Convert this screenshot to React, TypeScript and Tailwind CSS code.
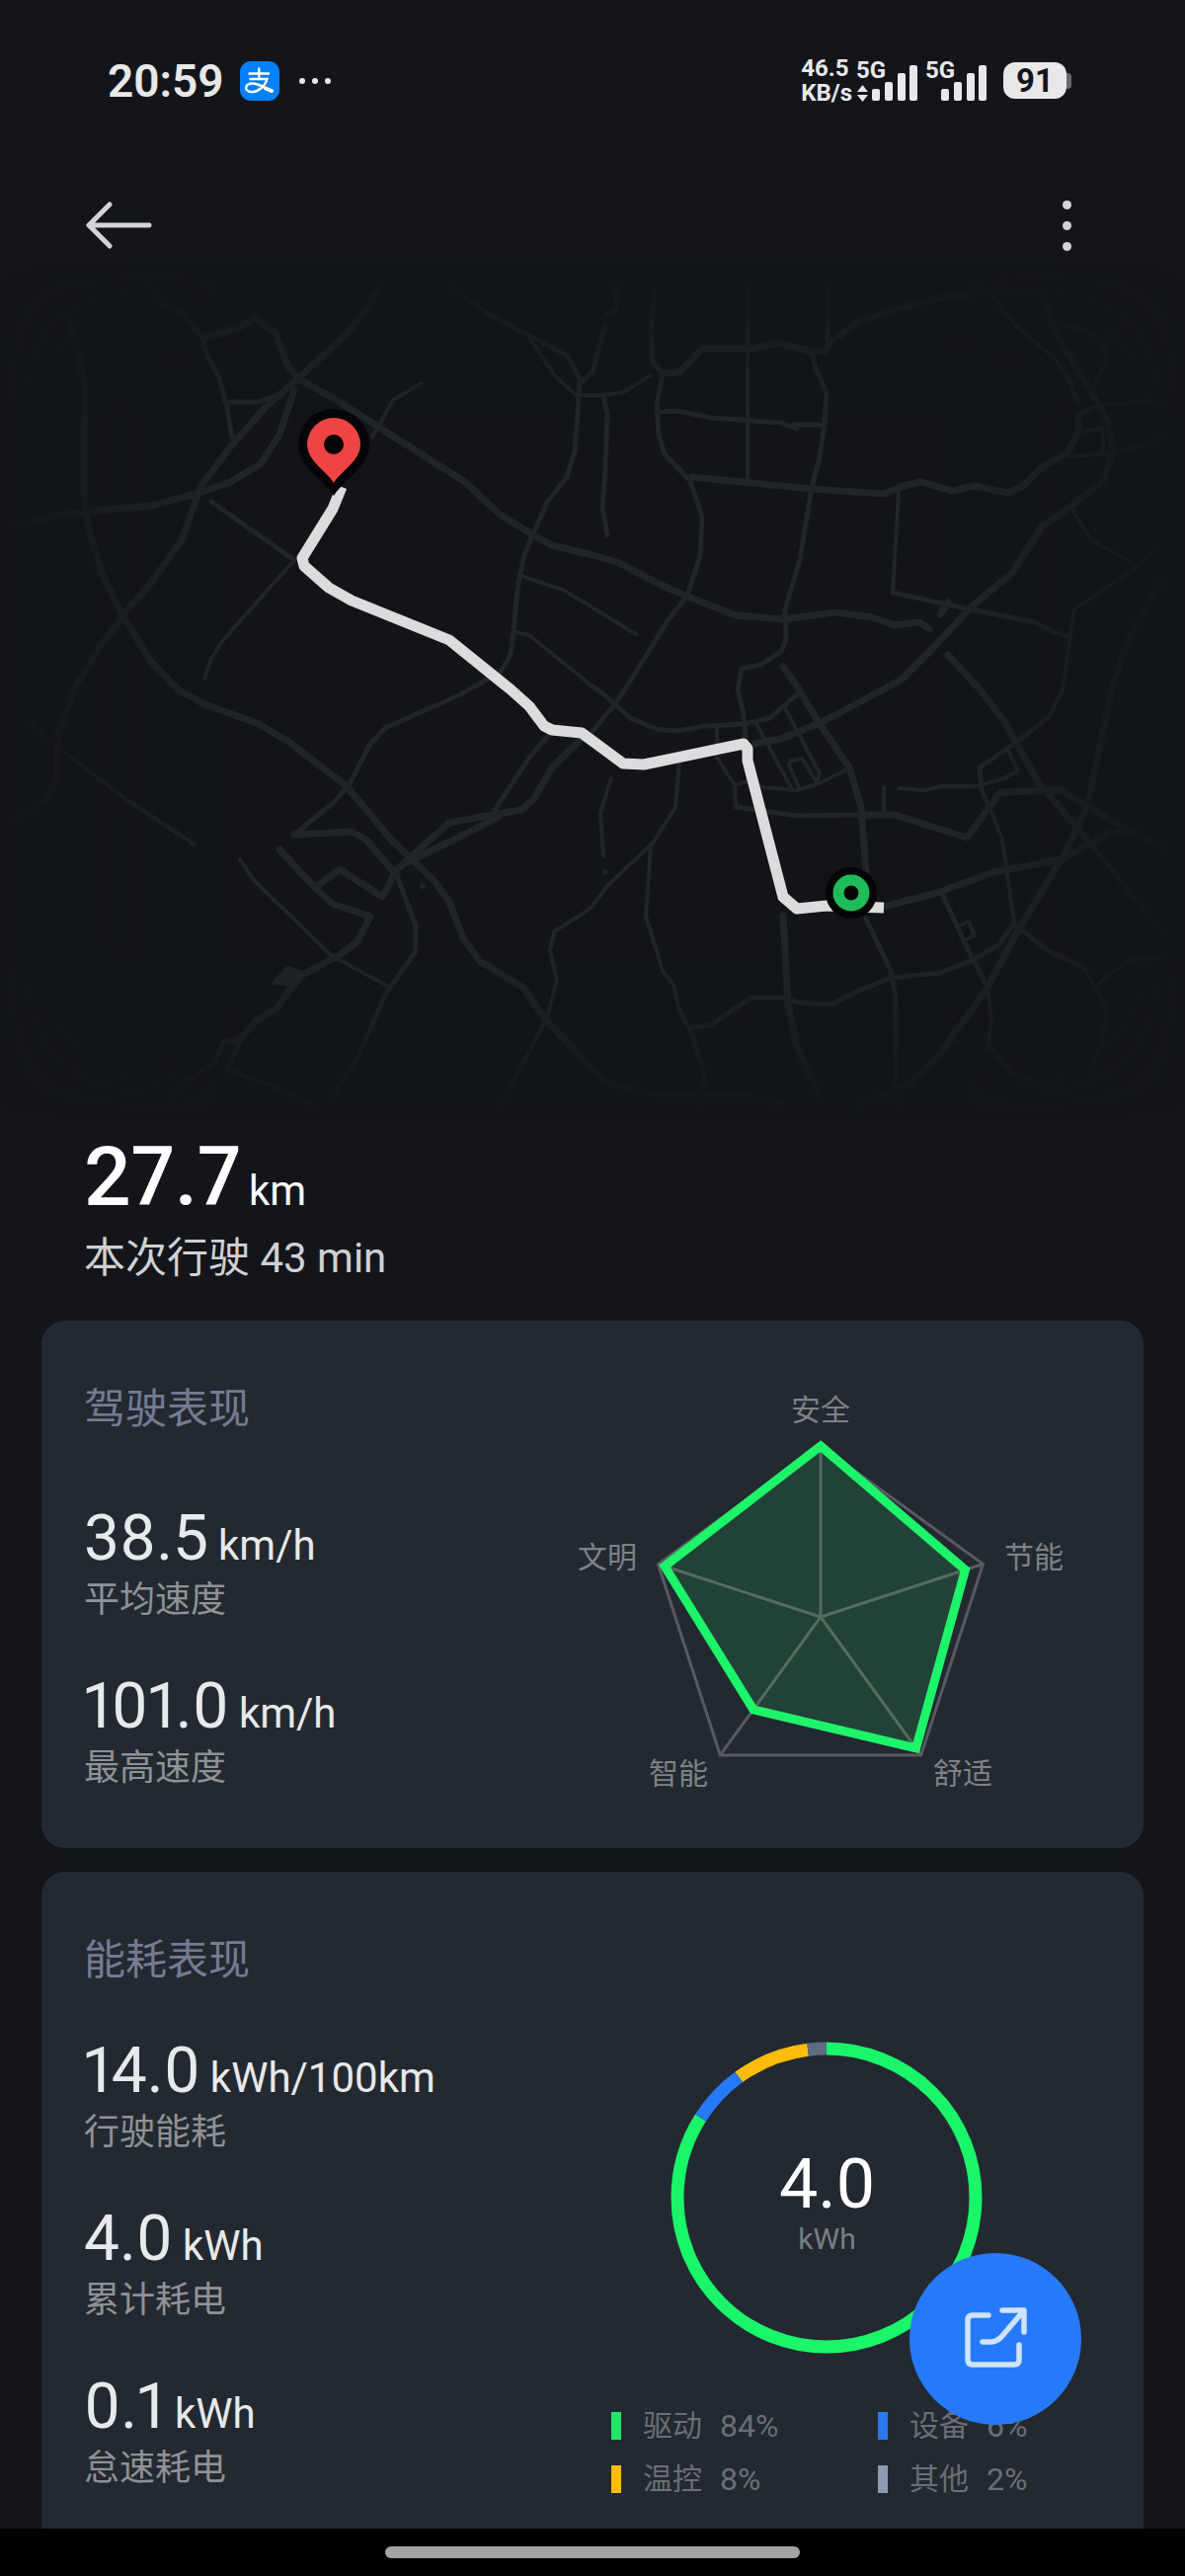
import React from "react";

type Stat = { value: string; unit: string; label: string };

const driveStats: Stat[] = [
  { value: "38.5", unit: "km/h", label: "平均速度" },
  { value: "101.0", unit: "km/h", label: "最高速度" },
];

const energyStats: Stat[] = [
  { value: "14.0", unit: "kWh/100km", label: "行驶能耗" },
  { value: "4.0", unit: "kWh", label: "累计耗电" },
  { value: "0.1", unit: "kWh", label: "怠速耗电" },
];

const usage = [
  { name: "驱动", percent: 84, stroke: "#1af56a", mark: "bg-[#22e767]" },
  { name: "设备", percent: 6, stroke: "#267afa", mark: "bg-[#2878f0]" },
  { name: "温控", percent: 8, stroke: "#ffbc0a", mark: "bg-[#ffbc0f]" },
  { name: "其他", percent: 2, stroke: "#5f6b80", mark: "bg-[#8d9ab5]" },
];

const scores = [
  { name: "安全", value: 1, x: 251, y: 51 },
  { name: "节能", value: 0.89, x: 467, y: 200 },
  { name: "舒适", value: 0.95, x: 395, y: 419 },
  { name: "智能", value: 0.67, x: 107, y: 419 },
  { name: "文明", value: 0.96, x: 35, y: 200 },
];

// Wide roads first, then medium and narrow ones
const roads = [
  {
    width: 7,
    lines: [
      "69,320 78,353 86,393 85,443 85,500 90,537 103,580 124,623 153,670 180,698 207,713 260,732 291,750 350,795 377,827 396,850 415,868 440,892 455,913 469,950 486,973 530,1000 553,1033 600,1083 619,1098 657,1107 707,1108 753,1110 791,1118",
      "15,532 57,522 88,518 153,512 199,500 233,488 264,470 283,440 298,395",
      "385,293 352,337 302,383 268,413 233,453 203,493 184,547 153,590 124,623 96,663 75,698 59,743 57,790 46,810 13,830",
      "205,342 239,333 258,322 279,337 291,370 302,383 344,407 383,432 471,488 505,520 540,542 559,552 600,562 627,570 669,592 694,603 745,623 795,627 845,620 883,625 906,633 931,630 941,637",
      "671,378 688,377 711,353 761,353 788,347 822,356 835,355 843,345",
      "849,340 868,327 910,312 952,302 1000,295 1040,293",
      "701,483 822,495 895,500 914,492 933,488 964,497 987,492 1021,499 1036,492 1055,473 1082,458 1092,437 1092,420",
      "1053,293 1071,340 1105,397 1122,427 1127,457 1117,487 1084,513 1055,533 1025,580 983,615 944,657 914,687 895,698 830,732 791,748 765,753",
      "1174,590 1140,653 1126,698 1101,817 1075,870 1032,940 998,1003 952,1067 921,1097 868,1120",
      "960,663 992,698 1017,730 1052,793 1101,850",
      "872,825 906,825 979,848 1002,817 1013,802 1075,800 1136,837 1182,858",
      "895,918 952,903 1006,883 1075,870 1124,843 1142,843",
      "283,860 320,900 337,915 375,928 362,953 344,967 306,987 293,1003 279,1022 260,1033 243,1052",
      "321,897 344,880 387,908 402,880 455,833 498,825 528,820 540,810 559,777 589,748",
      "413,873 460,850 505,827",
      "298,845 356,842 371,850 402,887",
      "793,675 809,698 830,733 860,777 872,817 877,883 877,920",
      "793,927 798,1017 807,1060 830,1110",
      "960,610 952,622",
    ],
  },
  {
    width: 5,
    lines: [
      "153,287 165,310 186,317 205,342 209,358 222,383 230,413 235,443",
      "459,292 494,317 536,340 574,360 587,383 586,403 582,457 574,483 555,507 540,540 530,565 524,597 520,640 517,663 507,680 475,698 467,703 390,737 375,753 352,797 337,813 298,845",
      "613,328 600,377 587,388",
      "625,290 623,317 615,318",
      "611,400 615,420 613,477 610,513 615,542",
      "232,407 260,407 283,400",
      "214,508 298,567",
      "600,695 608,700 638,727 665,738 684,740 715,735 753,733 780,727 807,703",
      "663,293 659,337 661,367 671,378 665,410 667,440 673,460 699,487 711,523 709,563 696,603 677,627 661,653 633,698 621,715 600,740",
      "822,357 826,373 837,397 835,430 830,463 822,493 810,567 795,617 796,647 791,660 770,673 751,677 747,698 753,723 755,750",
      "669,417 684,416 722,423 791,428 807,434 803,430 832,430",
      "745,817 807,826 872,825",
      "904,600 983,617 1048,630 1067,640 1084,645",
      "1101,850 1180,947",
      "1063,725 1029,752 992,777 994,800 1002,817",
      "1027,935 1011,957 983,973 952,985 902,990 872,1002 841,1017 810,1015 791,1010 761,1010 719,1038 701,1040",
      "877,930 902,983 907,1010 907,1127",
      "243,1052 226,1055 216,1077 184,1097 168,1123",
      "243,1053 230,1083 268,1097 318,1120",
      "402,887 421,937 421,963 390,1007 364,1067 333,1117",
      "501,820 536,767 555,745",
      "688,1023 701,1047 713,1087 711,1123",
      "954,905 983,967 1000,1000",
      "1092,420 1113,410",
      "1029,937 1061,962 1098,980",
    ],
  },
  {
    width: 4,
    lines: [
      "427,388 398,405 383,432 377,442",
      "298,567 226,648 214,667 207,687",
      "536,342 563,382 584,400 611,400 631,397 659,380",
      "528,583 570,597 600,615 644,642",
      "522,640 536,643 600,695",
      "838,290 838,347",
      "757,290 757,488",
      "910,498 904,600",
      "1092,410 1082,383 1067,362 1029,330 1002,297",
      "1075,330 1095,332 1117,345 1120,367 1105,397",
      "1117,345 1147,327",
      "1113,410 1182,405",
      "1092,437 1117,434 1117,458",
      "1086,462 1127,459 1185,442",
      "1084,513 1105,547 1153,573 1113,600 1088,617 1084,643 1076,698 1063,725",
      "1153,573 1174,553",
      "726,738 726,767 744,795 745,817",
      "744,795 757,791 772,797 807,800 830,793 860,778",
      "766,733 801,797",
      "795,717 830,783 828,790",
      "809,797 799,775 801,770 812,768 826,790",
      "895,797 895,823",
      "910,798 937,800 953,796 990,796 1017,788 1031,780 1021,760",
      "1002,817 1015,850 1027,933",
      "1000,1000 1004,1033 1001,1058 1029,1090 1098,1107",
      "969,938 981,933 987,947 977,952",
      "1098,980 1120,1020 1117,1053 1098,1100",
      "1113,995 1143,972 1182,970",
      "688,773 684,817 659,857 654,927 671,983 682,997 688,1023",
      "659,855 615,897 600,917 593,923 561,943 557,963 564,993 553,1033 524,1087 505,1123",
      "619,788 608,823 611,867",
      "25,728 57,755 126,808 197,855",
      "243,870 256,890 335,967 392,998",
    ],
  },
];

const route =
  "346,493 337,515 306,565 308,573 333,595 356,608 455,648 517,698 536,715 551,735 559,739 589,742 631,773 652,774 753,753 757,758 757,770 793,908 807,920 837,917 895,919";

function StatusBar() {
  return (
    <div className="flex h-[163px] items-center justify-between pl-[109px] pr-[115px] text-[#e8e8e8]">
      <div className="flex items-center">
        <span className="text-[46px] font-semibold leading-none">20:59</span>
        <svg className="ml-4 size-10" viewBox="0 0 40 40" aria-label="支付宝">
          <rect width="40" height="40" rx="11" fill="#0480fb" />
          <g fill="none" stroke="#fff" strokeWidth="2.4" strokeLinecap="round">
            <path d="M9.5 12.5H29M19.3 7.5V18M10.5 18H27.5C25.5 25 18 32 10.5 31C4 30 5 23 12 22.5C19 22 26 28 33 30" />
            <path d="M26 27.5L32 30" strokeWidth="4" />
          </g>
        </svg>
        <div className="ml-5 flex gap-[7px]">
          <i className="size-[6px] rounded-full bg-current" />
          <i className="size-[6px] rounded-full bg-current" />
          <i className="size-[6px] rounded-full bg-current" />
        </div>
      </div>
      <div className="flex items-center">
        <div className="mr-1 flex flex-col text-[24px] font-bold leading-[25px]">
          <span>46.5</span>
          <span>KB/s</span>
        </div>
        <Signal arrows />
        <div className="w-[7px]" />
        <Signal />
        <div className="ml-4 flex items-center">
          <span className="flex h-[37px] w-16 items-center justify-center rounded-xl bg-[#e8e8e8] text-[33px] font-bold leading-none text-[#13151a]">
            91
          </span>
          <i className="h-4 w-[5px] rounded-r bg-[#68696d]" />
        </div>
      </div>
    </div>
  );
}

function Signal({ arrows = false }: { arrows?: boolean }) {
  return (
    <svg className="h-12 w-[63px]" viewBox="0 0 63 48" fill="currentColor">
      <text x="0" y="21" fontSize="24" fontWeight="700">
        5G
      </text>
      {arrows && <path d="M6.500 28L12 35H1ZM6.500 45L1 38H12Z" />}
      <rect x="16" y="32" width="8" height="12" rx="2" />
      <rect x="29" y="25" width="8" height="19" rx="2" />
      <rect x="42" y="16" width="8" height="28" rx="2" />
      <rect x="54" y="8" width="8" height="36" rx="2" />
    </svg>
  );
}

function TopBar() {
  return (
    <header className="flex h-[130px] items-center justify-between px-[86px] text-[#d3d4d6]">
      <button type="button" aria-label="返回">
        <svg className="h-12 w-[70px]" viewBox="0 0 70 48" fill="none" stroke="currentColor" strokeWidth="5" strokeLinecap="round" strokeLinejoin="round">
          <path d="M65 24H4M25 3L4 24L25 45" />
        </svg>
      </button>
      <button type="button" aria-label="更多" className="flex w-[68px] flex-col items-center gap-3">
        <i className="size-[9px] rounded-full bg-current" />
        <i className="size-[9px] rounded-full bg-current" />
        <i className="size-[9px] rounded-full bg-current" />
      </button>
    </header>
  );
}

function RouteMap() {
  return (
    <svg className="-mt-[23px] block h-auto w-full" viewBox="0 270 1200 860" fill="none" role="img" aria-label="行驶路线">
      <defs>
        <linearGradient id="fadeX">
          <stop offset="0" stopColor="#fff" stopOpacity="0" />
          <stop offset="0.2" stopColor="#fff" />
          <stop offset="0.8" stopColor="#fff" />
          <stop offset="1" stopColor="#fff" stopOpacity="0" />
        </linearGradient>
        <linearGradient id="fadeY" x2="0" y2="1">
          <stop offset="0" stopColor="#fff" stopOpacity="0" />
          <stop offset="0.18" stopColor="#fff" />
          <stop offset="0.8" stopColor="#fff" />
          <stop offset="1" stopColor="#fff" stopOpacity="0" />
        </linearGradient>
        <mask id="maskX" maskUnits="userSpaceOnUse" x="0" y="270" width="1200" height="860">
          <rect y="270" width="1200" height="860" fill="url(#fadeX)" />
        </mask>
        <mask id="maskY" maskUnits="userSpaceOnUse" x="0" y="270" width="1200" height="860">
          <rect y="270" width="1200" height="860" fill="url(#fadeY)" />
        </mask>
      </defs>
      <g mask="url(#maskX)">
        <g mask="url(#maskY)" stroke="#212429" strokeLinecap="round" strokeLinejoin="round">
          <rect y="270" width="1200" height="860" fill="#121418" stroke="none" />
          {roads.map((group) =>
            group.lines.map((points) => <polyline key={points} points={points} strokeWidth={group.width} />)
          )}
          <path d="M291 980L277 995L300 997L306 985Z" fill="#212429" strokeWidth="4" />
          <circle cx="428" cy="897" r="3" fill="#212429" stroke="none" />
          <circle cx="613" cy="883" r="3" fill="#212429" stroke="none" />
        </g>
      </g>
      <polyline points={route} stroke="#dcdcdc" strokeWidth="11" strokeLinejoin="round" />
      <path d="M338 502C327 485 302 472 302 450A36 36 0 0 1 374 450C374 472 349 485 338 502Z" fill="#040506" />
      <path d="M338 489C332 478 311 467 311 450A27 27 0 0 1 365 450C365 467 344 478 338 489Z" fill="#ef4444" />
      <circle cx="338" cy="450" r="10" fill="#040506" />
      <circle cx="862" cy="904" r="26" fill="#040506" />
      <circle cx="862" cy="904" r="13" stroke="#1fbd59" strokeWidth="11" />
    </svg>
  );
}

function StatItem({ value, unit, label }: Stat) {
  return (
    <div>
      <p className="text-[42px] leading-[76px] text-[#e8e9eb]">
        <span className="mr-[10px] text-[64px] proportional-nums">{value}</span>
        {unit}
      </p>
      <p className="text-[36px] leading-[34px] text-[#8f9296]">{label}</p>
    </div>
  );
}

function RadarChart() {
  const radius = 173;
  const point = (index: number, value: number) => {
    const angle = ((index * 72 - 90) * Math.PI) / 180;
    return `${251 + Math.cos(angle) * radius * value},${250 + Math.sin(angle) * radius * value}`;
  };
  return (
    <svg className="h-auto w-[502px]" viewBox="0 0 502 440" fill="none" role="img" aria-label="驾驶表现评分">
      <g stroke="#5a5a5e" strokeWidth="3">
        <polygon points={scores.map((_, i) => point(i, 1)).join(" ")} />
        {scores.map((s, i) => (
          <polyline key={s.name} points={`251,250 ${point(i, 1)}`} />
        ))}
      </g>
      <polygon
        points={scores.map((s, i) => point(i, s.value)).join(" ")}
        fill="#1ef46a"
        fillOpacity="0.12"
        stroke="#1ef46a"
        strokeWidth="9"
      />
      {scores.map((s) => (
        <text key={s.name} x={s.x} y={s.y} textAnchor="middle" fontSize="30" fill="#7f8286">
          {s.name}
        </text>
      ))}
    </svg>
  );
}

function UsageRing() {
  let start = 0;
  return (
    <div className="relative size-[317px]">
      <svg className="size-full -rotate-90" viewBox="0 0 317 317" fill="none" role="img" aria-label="能耗占比">
        {usage.map((u) => {
          const offset = -start;
          start += u.percent;
          return (
            <circle
              key={u.name}
              cx="158"
              cy="158"
              r="151"
              pathLength="100"
              stroke={u.stroke}
              strokeWidth="13"
              strokeDasharray={`${u.percent} ${100 - u.percent}`}
              strokeDashoffset={offset}
            />
          );
        })}
      </svg>
      <div className="absolute inset-0 flex flex-col items-center justify-center pt-3">
        <span className="text-[70px] leading-[72px] text-white">4.0</span>
        <span className="text-[30px] leading-[40px] text-[#7b7e83]">kWh</span>
      </div>
    </div>
  );
}

export default function App() {
  return (
    <div className="flex min-h-screen flex-col bg-[#13151a] font-[Roboto,'Noto_Sans_CJK_SC',sans-serif]">
      <StatusBar />
      <TopBar />
      <RouteMap />

      <main className="flex flex-1 flex-col px-[42px]">
        <section className="mb-[38px] px-[43px] pt-[19px]">
          <p className="text-[42px] leading-[86px] text-white">
            <span className="mr-2 text-[84px] font-medium proportional-nums">27.7</span>
            km
          </p>
          <p className="text-[42px] leading-[50px] text-[#d0d1d3]">本次行驶 43 min</p>
        </section>

        <section className="mb-6 flex justify-between rounded-3xl bg-[#232930] pb-11 pl-[43px] pr-[76px] pt-[50px]">
          <div>
            <h2 className="mb-[53px] text-[42px] leading-[80px] text-[#767b93]">驾驶表现</h2>
            <div className="flex flex-col gap-[53px]">
              {driveStats.map((s) => (
                <StatItem key={s.label} {...s} />
              ))}
            </div>
          </div>
          <RadarChart />
        </section>

        <section className="flex flex-1 justify-between rounded-t-3xl bg-[#232930] pb-6 pl-[43px] pr-[72px] pt-[50px]">
          <div>
            <h2 className="mb-[34px] text-[42px] leading-[80px] text-[#767b93]">能耗表现</h2>
            <div className="flex flex-col gap-[53px]">
              {energyStats.map((s) => (
                <StatItem key={s.label} {...s} />
              ))}
            </div>
          </div>
          <div className="w-[467px] pt-[121px]">
            <div className="ml-[60px]">
              <UsageRing />
            </div>
            <ul className="mt-[53px] grid grid-cols-[270px_1fr] gap-y-[14px] text-[32px] leading-[40px] text-[#6b6f75]">
              {usage.map((u) => (
                <li key={u.name} className="flex items-center">
                  <i className={`mr-[22px] h-7 w-[10px] ${u.mark}`} />
                  <span className="mr-[18px] text-[30px]">{u.name}</span>
                  {u.percent}%
                </li>
              ))}
            </ul>
          </div>
        </section>
      </main>

      <button
        type="button"
        aria-label="分享"
        className="fixed bottom-[153px] right-[105px] flex size-[174px] items-center justify-center rounded-full bg-[#267afa] text-[#cfe2ff]"
      >
        <svg className="size-[72px]" viewBox="0 0 72 72" fill="none" stroke="currentColor" strokeWidth="5.500" strokeLinecap="round" strokeLinejoin="round">
          <path d="M29 12H13Q8 12 8 17V57Q8 62 13 62H55Q60 62 60 57V42" />
          <path d="M43 7H65V29M65 7L42 34Q37 39 31 39H23" />
        </svg>
      </button>

      <footer className="flex h-12 items-center justify-center bg-black">
        <div className="h-3 w-[35%] rounded-full bg-[#a3a3a3]" />
      </footer>
    </div>
  );
}
